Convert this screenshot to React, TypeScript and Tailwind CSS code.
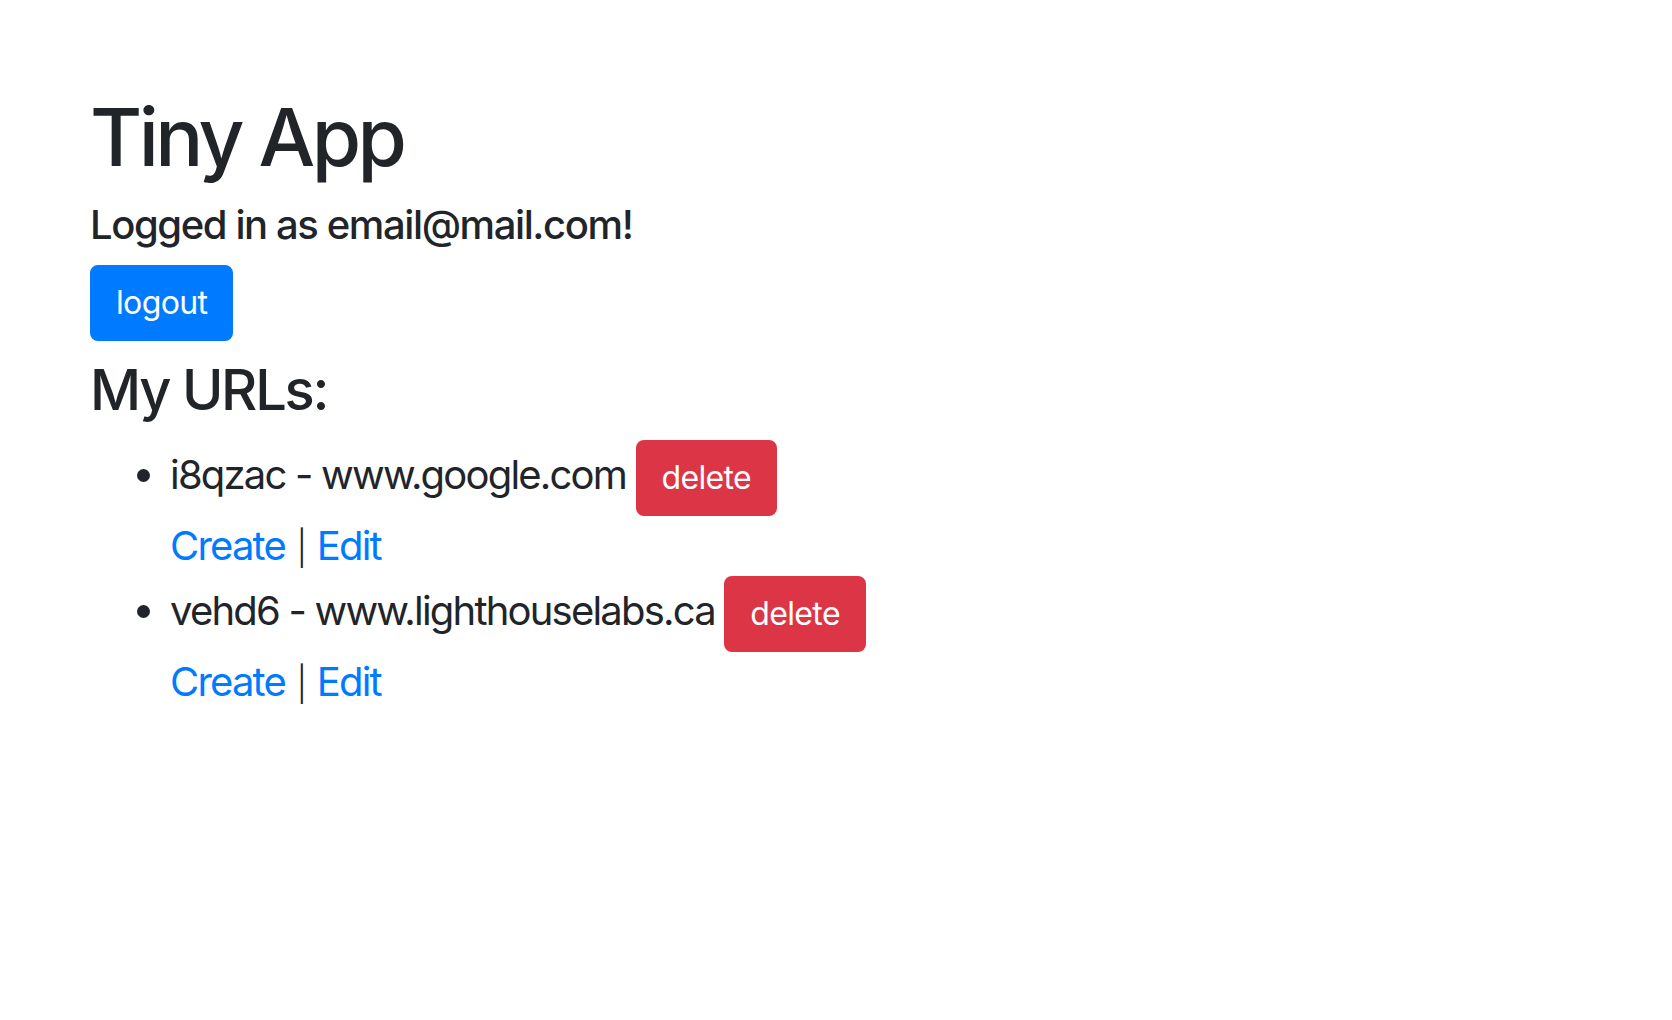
import React from 'react';

type Url = { id: string; longUrl: string };

const urls: Url[] = [
  { id: 'i8qzac', longUrl: 'www.google.com' },
  { id: 'vehd6', longUrl: 'www.lighthouselabs.ca' },
];

const font = { fontFamily: 'Inter, "Noto Sans", sans-serif' };

export default function App() {
  return (
    <div className="min-h-screen bg-white text-[#212529] pt-[89px] pl-[90px]" style={font}>
      <h1 className="text-[80px] leading-[96px] font-medium tracking-[-0.045em] mb-4">Tiny App</h1>
      <h5 className="text-[40px] leading-[48px] font-medium tracking-[-0.035em] mb-4">Logged in as email@mail.com!</h5>
      <form onSubmit={e => e.preventDefault()}>
        <button
          type="submit"
          className="inline-block bg-[#007bff] border-2 border-[#007bff] text-white text-[32px] leading-[48px] tracking-[-0.02em] px-6 py-3 rounded-lg"
        >
          logout
        </button>
      </form>
      <h3 className="text-[56px] leading-[67px] font-medium tracking-[-0.04em] mt-4 mb-4">My URLs:</h3>
      <ul className="list-disc pl-20 text-[40px] leading-[60px] tracking-[-0.045em]">
        {urls.map(url => (
          <li key={url.id}>
            {url.id} - {url.longUrl}{' '}
            <button
              type="button"
              className="inline-block align-middle bg-[#dc3545] border-2 border-[#dc3545] text-white text-[32px] leading-[48px] tracking-[-0.02em] px-6 py-3 rounded-lg"
            >
              delete
            </button>
            <div>
              <a href="#" className="text-[#007bff]">Create</a>{' '}
              <span className="text-[34px] leading-none font-light mx-[2px]">|</span>{' '}
              <a href="#" className="text-[#007bff]">Edit</a>
            </div>
          </li>
        ))}
      </ul>
    </div>
  );
}
